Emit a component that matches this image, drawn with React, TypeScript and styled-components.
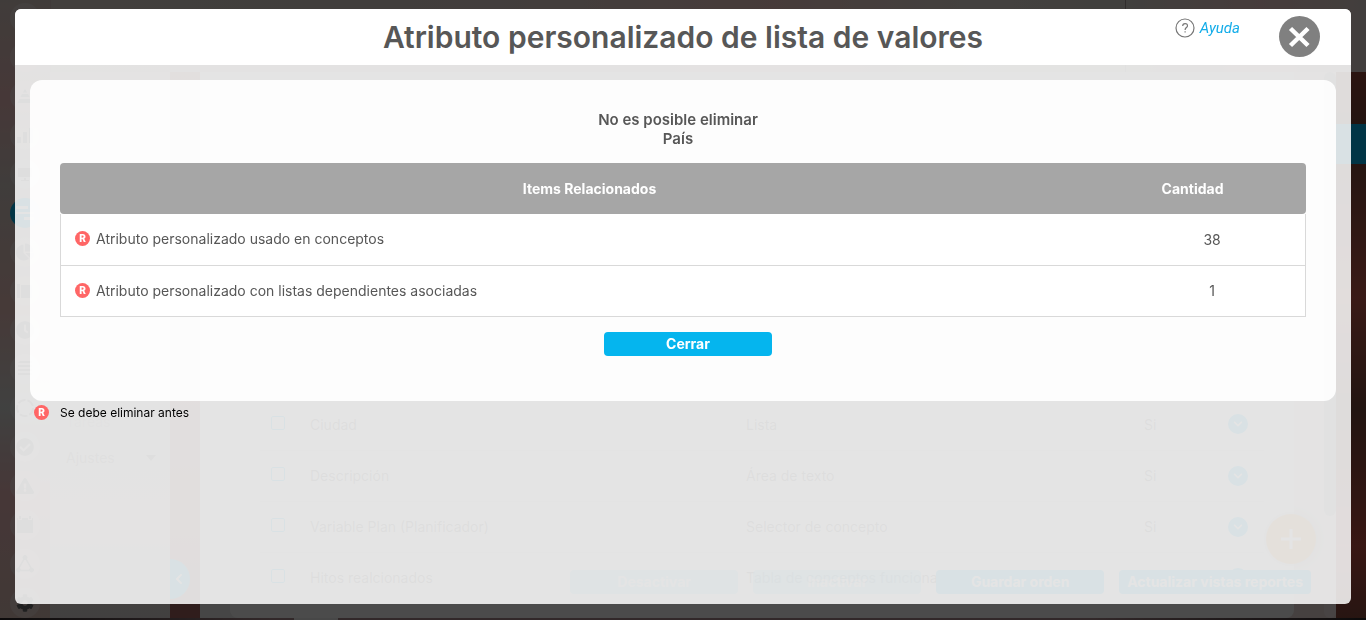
import React from "react";
import styled, { createGlobalStyle, css } from "styled-components";
import {
  FaChartPie,
  FaClock,
  FaCheckCircle,
  FaExclamationTriangle,
  FaCog,
  FaChevronDown,
  FaChevronLeft,
} from "react-icons/fa";

const GlobalStyle = createGlobalStyle`
  *, *::before, *::after { box-sizing: border-box; }
  body {
    margin: 0;
    font-family: Inter, "Liberation Sans", sans-serif;
    font-size: 14px;
    color: #575757;
  }
  button { font: inherit; border: 0; padding: 0; cursor: pointer; }
`;

const CYAN = "#05b5ee";

/* ---------- application behind the dialog ---------- */

const Shell = styled.div`
  position: relative;
  height: 100vh;
  overflow: hidden;
  display: grid;
  grid-template-columns: 50px 120px 30px 1fr 30px;
  grid-template-rows: 72px 1fr 2px;
  background: linear-gradient(#b44133, #74473a 22%, #c45a4e 48%, #74473a 66%, #c04e44 88%, #84483c);
`;

const Rail = styled.nav`
  grid-column: 1;
  grid-row: 1 / 3;
  padding: 3px 0 0 10px;
  display: flex;
  flex-direction: column;
  gap: 9px;
  overflow: hidden;
  background: linear-gradient(#daccc5, #eebebe 16%, #d8cec8 30%, #eec4be 50%, #dadcda 66%, #eebabb 80%, #dcc0b8);
`;

const RailButton = styled.button<{ $active?: boolean }>`
  flex: none;
  width: 30px;
  height: 30px;
  border-radius: 50%;
  display: flex;
  align-items: center;
  justify-content: center;
  background: ${(p) => (p.$active ? CYAN : "rgba(255, 255, 255, 0.3)")};
  color: ${(p) => (p.$active ? "#fff" : "#6c6c6c")};
  svg { width: 18px; height: 18px; }
`;

const TopBar = styled.header`
  grid-column: 2 / 6;
  grid-row: 1;
  border-left: 1px solid #d8c8c4;
  display: flex;
  justify-content: flex-end;
  background: linear-gradient(90deg, #e0d6d0, #dcd4cc 20%, #e0d4ce 34%, #f0cac4 55%, #e4dcd6 70%, #dcd8d2 82%, #f0cac8 92%, #e0d4cf);
`;

const TopBarAccount = styled.div`
  width: 241px;
  border-left: 1px solid #a89c98;
`;

const SideMenu = styled.aside`
  grid-column: 2;
  grid-row: 2;
  padding: 340px 12px 0 16px;
  display: flex;
  flex-direction: column;
  gap: 16px;
  color: #888;
  background: linear-gradient(#ece4e2, #e8e0de 60%, #ece2e0 85%, #e0dad8);
`;

const MenuLabel = styled.span`
  color: #bbb;
  line-height: 20px;
`;

const MenuItem = styled.div`
  display: flex;
  align-items: center;
  justify-content: space-between;
  line-height: 20px;
`;

const Gutter = styled.div`
  grid-column: 3;
  grid-row: 2;
  display: flex;
  align-items: flex-end;
  padding-bottom: 19px;
  background: linear-gradient(#c88078, #c07870 60%, #a3635f);
`;

const CollapseTab = styled.button`
  width: 20px;
  height: 40px;
  border-radius: 0 20px 20px 0;
  background: ${CYAN};
  color: #fff;
  svg { width: 10px; height: 12px; display: block; margin-left: 4px; }
`;

const Content = styled.main`
  grid-column: 4;
  grid-row: 2;
  position: relative;
  overflow: hidden;
  display: flex;
  padding-left: 30px;
  background: linear-gradient(90deg, #ececec 70%, #ecdcd8);
`;

const Sheet = styled.div`
  flex: 1;
  min-width: 0;
  padding: 327px 30px 0;
  border-radius: 0 0 8px 8px;
  background: #fff;
`;

const ScrollTrack = styled.div`
  width: 12px;
  margin-left: 30px;
  border-radius: 6px;
  background: #f4e8e6;
`;

const ScrollThumb = styled.div`
  height: 444px;
  border-radius: 6px;
  background: #b4b4b4;
`;

const AttributeTable = styled.table`
  width: 100%;
  table-layout: fixed;
  border-collapse: collapse;
  td { height: 51px; padding: 0; border-bottom: 1px solid #e8e8e8; white-space: nowrap; color: #666; }
  td:nth-child(1) { width: 50px; padding-left: 11px; }
  td:nth-child(2) { width: 436px; }
  td:nth-child(4) { width: 84px; }
  td:nth-child(5) { width: 36px; }
`;

const RowCheck = styled.input`
  appearance: none;
  display: block;
  width: 14px;
  height: 14px;
  margin: 0 0 3px;
  border: 1px solid ${CYAN};
  border-radius: 2px;
`;

const RowToggle = styled.button`
  display: flex;
  align-items: center;
  justify-content: center;
  width: 20px;
  height: 20px;
  border-radius: 50%;
  background: ${CYAN};
  color: #fff;
  svg { width: 10px; height: 10px; }
`;

const ActionBar = styled.div`
  position: absolute;
  right: 25px;
  bottom: 24px;
  display: flex;
  gap: 15px;
`;

const buttonLook = css`
  min-width: 168px;
  height: 24px;
  border-radius: 4px;
  background: ${CYAN};
  color: #fff;
  font-weight: 700;
  line-height: 24px;
`;

const ActionButton = styled.button`
  ${buttonLook}
  padding: 0 8px;
  &:disabled { opacity: 0.5; }
`;

const AddButton = styled.button`
  position: absolute;
  right: 20px;
  bottom: 54px;
  width: 50px;
  height: 50px;
  border-radius: 50%;
  display: flex;
  align-items: center;
  justify-content: center;
  background: #ffa03c;
  box-shadow: 0 0 8px rgba(0, 0, 0, 0.3);
`;

const SideTab = styled.div`
  grid-column: 5;
  grid-row: 2;
  height: 40px;
  margin-top: 52px;
  background: ${CYAN};
`;

const BottomEdge = styled.div`
  grid-column: 1 / 6;
  grid-row: 3;
  padding-left: 294px;
  background: linear-gradient(90deg, #2a2426, #a8888c 20%, #a8888c 80%, #2a2426);
`;

const BottomHandle = styled.div`
  width: 44px;
  height: 2px;
  background: #f0f0f0;
`;

/* ---------- dialog ---------- */

const Overlay = styled.div`
  position: fixed;
  inset: 0;
  padding: 9px 15px 16px;
  display: flex;
  background: rgba(0, 0, 0, 0.706);
`;

const Dialog = styled.section`
  flex: 1;
  display: flex;
  flex-direction: column;
  border-radius: 6px;
  overflow: hidden;
  background: rgba(255, 255, 255, 0.85);
`;

const DialogHeader = styled.header`
  flex: none;
  height: 56px;
  display: grid;
  grid-template-columns: 1fr auto 1fr;
  align-items: center;
  background: #fff;
`;

const DialogTitle = styled.h1`
  grid-column: 2;
  margin: 0;
  font-size: 30px;
  font-weight: 600;
  line-height: 36px;
`;

const HeaderTools = styled.div`
  display: flex;
  align-items: center;
  justify-content: flex-end;
  gap: 39px;
  padding: 0 31px 2px 0;
`;

const HelpLink = styled.a`
  display: flex;
  align-items: center;
  gap: 5px;
  padding-bottom: 17px;
  font-family: Roboto, "Liberation Sans", sans-serif;
  font-size: 15px;
  font-style: italic;
  line-height: 20px;
  color: #12ace9;
  text-decoration: none;
`;

const CloseButton = styled.button`
  width: 41px;
  height: 41px;
  border-radius: 50%;
  background: #808080;
  svg { display: block; }
`;

const Panel = styled.div`
  margin: 15px 15px 0;
  padding: 30px 30px 45px;
  border-radius: 12px;
  background: rgba(255, 255, 255, 0.9);
`;

const Message = styled.p`
  margin: 0 0 15px;
  padding-right: 10px;
  text-align: center;
  font-size: 15px;
  font-weight: 600;
  line-height: 19px;
`;

const RelatedTable = styled.table`
  width: 100%;
  table-layout: fixed;
  border-collapse: separate;
  border-spacing: 0;
`;

const HeadCell = styled.th<{ $count?: boolean }>`
  width: ${(p) => (p.$count ? "15%" : "85%")};
  height: 51px;
  padding: 0 ${(p) => (p.$count ? "40px" : "0")} 0 0;
  background: #a6a6a6;
  color: #fff;
  font-weight: 700;
  border-radius: ${(p) => (p.$count ? "0 4px 4px 0" : "4px 0 0 4px")};
`;

const Cell = styled.td<{ $count?: boolean }>`
  height: 52px;
  background: #fff;
  border: 0 solid #d9d9d9;
  border-bottom-width: 1px;
  text-align: ${(p) => (p.$count ? "center" : "left")};
  ${(p) => (p.$count ? "border-right-width: 1px;" : "border-left-width: 1px;")}
  padding: ${(p) => (p.$count ? "0 0 1px" : "0 0 2px 14px")};
  tr:last-child > & { height: 51px; }
`;

const ItemLabel = styled.div`
  display: flex;
  align-items: center;
  gap: 6px;
`;

const Legend = styled.div`
  display: flex;
  align-items: center;
  gap: 11px;
  padding: 3px 19px;
  font-size: 12px;
  line-height: 17px;
  color: #000;
`;

const Badge = styled.span`
  flex: none;
  width: 15px;
  height: 15px;
  border-radius: 50%;
  background: #ff6666;
  color: #fff;
  font-size: 10px;
  font-weight: 800;
  line-height: 15px;
  text-align: center;
`;

const Footer = styled.div`
  display: flex;
  justify-content: center;
  padding: 15px 0 0 10px;
`;

const PrimaryButton = styled.button`
  ${buttonLook}
`;

const Glyph = ({ d }: { d: string }) => (
  <svg viewBox="0 0 18 18" fill="currentColor" aria-hidden="true">
    <path d={d} />
  </svg>
);

const railItems: { name: string; icon: React.ReactNode; active?: boolean }[] = [
  { name: "Inicio", icon: null },
  { name: "Buscar", icon: null },
  { name: "Niveles", icon: <Glyph d="M9 2l2 3.500H7zM6 7h6l1.500 3h-9zM3.500 12h11l2 4h-15z" /> },
  { name: "Indicadores", icon: <Glyph d="M1 11h4v6H1zM7 6h4v11H7zM13 2h4v15h-4z" /> },
  { name: "Presentación", icon: <Glyph d="M2 3h14v9H2zM8 13h2v2h3v1H5v-1h3z" /> },
  { name: "Planes", icon: <Glyph d="M0 2h12v3H0zM0 8h18v2H0zM8 13h10v3H8z" />, active: true },
  { name: "Reportes", icon: <FaChartPie /> },
  { name: "Documentos", icon: <Glyph d="M1 2h3v14H1zM5 3h11v13H5z" /> },
  { name: "Tiempo", icon: <FaClock /> },
  { name: "Listas", icon: <Glyph d="M4 1h12v2H2zM2 5h14v2H2zM2 9h14v2H2zM2 13h14v2H2z" /> },
  {
    name: "Procesos",
    icon: (
      <svg viewBox="0 0 18 18" fill="none" stroke="currentColor" strokeWidth="2" strokeDasharray="8 2">
        <circle cx="9" cy="9" r="8" />
      </svg>
    ),
  },
  { name: "Aprobaciones", icon: <FaCheckCircle /> },
  { name: "Riesgos", icon: <FaExclamationTriangle /> },
  { name: "Calendario", icon: <Glyph d="M3 0h2v3H3zM13 0h2v3h-2zM1 2h1v2h4V2h6v2h4V2h1v15H1z" /> },
  {
    name: "Relaciones",
    icon: (
      <svg viewBox="0 0 18 18" fill="currentColor" stroke="currentColor">
        <path d="M8 4L3 13M10 4l5 9M5 15.500h8" fill="none" strokeWidth="1.500" />
        <circle cx="9" cy="2.500" r="2" />
        <circle cx="2.500" cy="15" r="2" />
        <circle cx="15.500" cy="15" r="2" />
      </svg>
    ),
  },
  { name: "Configuración", icon: <FaCog /> },
];

const attributes = [
  ["Ciudad", "Lista"],
  ["Descripción", "Área de texto"],
  ["Variable Plan (Planificador)", "Selector de concepto"],
  ["Hitos realcionados", "Tabla de conceptos funcionales"],
];

const related = [
  { label: "Atributo personalizado usado en conceptos", count: 38 },
  { label: "Atributo personalizado con listas dependientes asociadas", count: 1 },
];

const Background = () => (
  <Shell aria-hidden="true">
    <TopBar>
      <TopBarAccount />
    </TopBar>
    <Rail>
      {railItems.map((item) => (
        <RailButton key={item.name} aria-label={item.name} $active={item.active}>
          {item.icon}
        </RailButton>
      ))}
    </Rail>
    <SideMenu>
      <MenuLabel>Tareas</MenuLabel>
      <MenuItem>
        Ajustes
        <svg width="14" height="8" viewBox="0 0 14 8" fill="#777">
          <path d="M2 1h10L7 7z" />
        </svg>
      </MenuItem>
    </SideMenu>
    <Gutter>
      <CollapseTab aria-label="Contraer menú">
        <FaChevronLeft />
      </CollapseTab>
    </Gutter>
    <Content>
      <Sheet>
        <AttributeTable>
          <tbody>
            {attributes.map(([name, type]) => (
              <tr key={name}>
                <td>
                  <RowCheck type="checkbox" aria-label={name} />
                </td>
                <td>{name}</td>
                <td>{type}</td>
                <td>Si</td>
                <td>
                  <RowToggle aria-label="Desplegar">
                    <FaChevronDown />
                  </RowToggle>
                </td>
              </tr>
            ))}
          </tbody>
        </AttributeTable>
      </Sheet>
      <ScrollTrack>
        <ScrollThumb />
      </ScrollTrack>
      <ActionBar>
        <ActionButton disabled>Desactivar</ActionButton>
        <ActionButton disabled>Inactivar</ActionButton>
        <ActionButton>Guardar orden</ActionButton>
        <ActionButton>Actualizar vistas reportes</ActionButton>
      </ActionBar>
      <AddButton aria-label="Agregar">
        <svg width="20" height="20" viewBox="0 0 20 20" stroke="#fff" strokeWidth="3">
          <path d="M10 0v20M0 10h20" />
        </svg>
      </AddButton>
    </Content>
    <SideTab />
    <BottomEdge>
      <BottomHandle />
    </BottomEdge>
  </Shell>
);

export default function App() {
  return (
    <>
      <GlobalStyle />
      <Background />
      <Overlay>
        <Dialog role="dialog" aria-modal="true" aria-labelledby="dialog-title">
          <DialogHeader>
            <DialogTitle id="dialog-title">Atributo personalizado de lista de valores</DialogTitle>
            <HeaderTools>
              <HelpLink href="#ayuda">
                <svg width="20" height="20" viewBox="0 0 20 20" fill="none" stroke="#777" aria-hidden="true">
                  <circle cx="10" cy="10" r="9" strokeWidth="1.200" />
                  <path d="M7.700 8c0-3.200 4.800-3.200 4.800-.3 0 1.900-2.400 1.900-2.400 4.200M10.100 13.200v1.400" strokeWidth="1.200" />
                </svg>
                Ayuda
              </HelpLink>
              <CloseButton aria-label="Cerrar ventana">
                <svg width="41" height="41" viewBox="0 0 41 41" stroke="#fff" strokeWidth="4.500">
                  <path d="M11.500 12.500l17.500 17M29 12.500l-17.500 17" />
                </svg>
              </CloseButton>
            </HeaderTools>
          </DialogHeader>
          <Panel>
            <Message>
              No es posible eliminar
              <br />
              País
            </Message>
            <RelatedTable>
              <thead>
                <tr>
                  <HeadCell scope="col">Items Relacionados</HeadCell>
                  <HeadCell scope="col" $count>
                    Cantidad
                  </HeadCell>
                </tr>
              </thead>
              <tbody>
                {related.map((row) => (
                  <tr key={row.label}>
                    <Cell>
                      <ItemLabel>
                        <Badge>R</Badge>
                        {row.label}
                      </ItemLabel>
                    </Cell>
                    <Cell $count>{row.count}</Cell>
                  </tr>
                ))}
              </tbody>
            </RelatedTable>
            <Footer>
              <PrimaryButton>Cerrar</PrimaryButton>
            </Footer>
          </Panel>
          <Legend>
            <Badge>R</Badge>
            Se debe eliminar antes
          </Legend>
        </Dialog>
      </Overlay>
    </>
  );
}
